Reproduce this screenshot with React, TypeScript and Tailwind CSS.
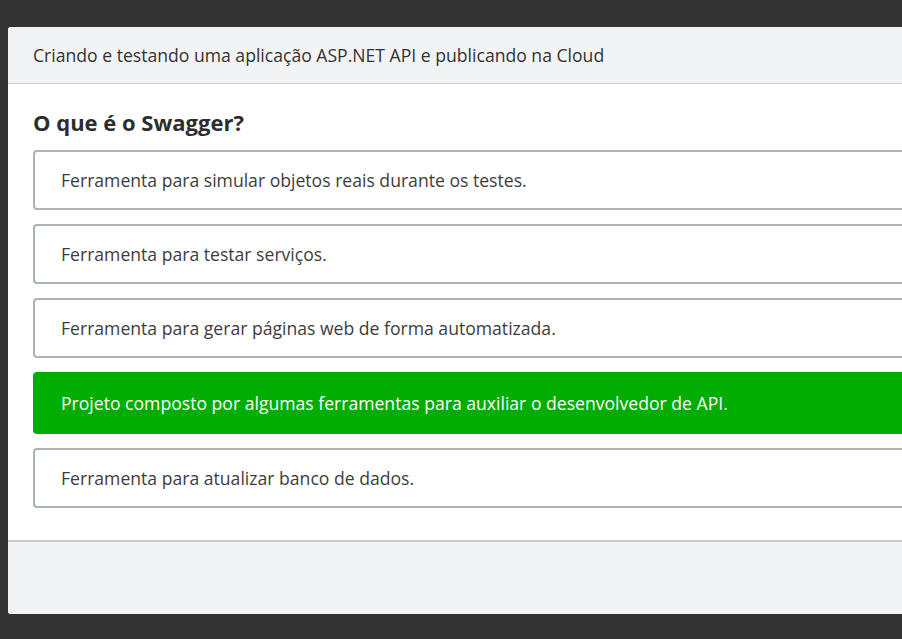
import { FC } from "react";

interface Option {
  text: string;
  correct?: boolean;
}

const options: Option[] = [
  { text: "Ferramenta para simular objetos reais durante os testes." },
  { text: "Ferramenta para testar serviços." },
  { text: "Ferramenta para gerar páginas web de forma automatizada." },
  {
    text: "Projeto composto por algumas ferramentas para auxiliar o desenvolvedor de API.",
    correct: true,
  },
  { text: "Ferramenta para atualizar banco de dados." },
];

const OptionBox: FC<Option> = ({ text, correct }) =>
  correct ? (
    <div className="flex h-[62px] items-center rounded-[4px] bg-[#00ad00] pl-[28px] text-[17.6px] font-medium leading-[24px] text-white">
      {text}
    </div>
  ) : (
    <div className="flex h-[60px] items-center rounded-[4px] border-2 border-[#aab2ba] bg-white pl-[26px] text-[17.6px] leading-[24px] text-[#3d3d3d]">
      {text}
    </div>
  );

export default function App() {
  return (
    <div
      className="h-[639px] w-[902px] overflow-hidden bg-[#333333] pl-[8px] pt-[27px]"
      style={{ fontFamily: "'Open Sans', sans-serif" }}
    >
      <div className="w-[1000px] overflow-hidden rounded-tl-[3px] rounded-bl-[3px] bg-white">
        <div className="flex h-[57px] items-center border-b border-[#c9cdd1] bg-[#f2f3f5] pl-[25px] text-[17.6px] leading-[24px] text-[#333333]">
          Criando e testando uma aplicação ASP.NET API e publicando na Cloud
        </div>
        <div className="pb-[32px] pl-[25px] pt-[24px]">
          <h2 className="mb-[14px] text-[22px] font-bold leading-[28px] text-[#2d2d2d]">
            O que é o Swagger?
          </h2>
          <div className="flex flex-col gap-[14px]">
            {options.map((o) => (
              <OptionBox key={o.text} {...o} />
            ))}
          </div>
        </div>
        <div className="h-[74px] border-t-2 border-[#c9cbcf] bg-[#f2f3f5]" />
      </div>
    </div>
  );
}
